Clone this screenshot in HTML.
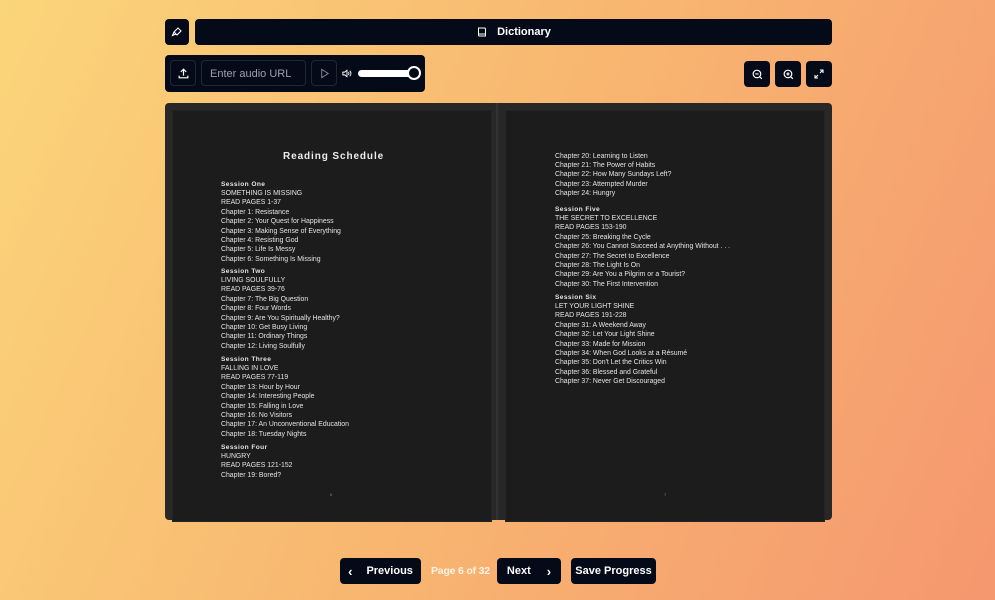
<!DOCTYPE html>
<html><head><meta charset="utf-8"><style>
*{box-sizing:border-box;margin:0;padding:0}
body{width:995px;height:600px;overflow:hidden;font-family:"Liberation Sans",sans-serif;background:linear-gradient(115deg,#fbd57a 0%,#f8b971 45%,#f5976f 100%);position:relative}
body:before{content:"";position:absolute;inset:0;background-image:radial-gradient(rgba(255,255,255,.25) 0.7px,transparent 0.8px);background-size:16px 16px}
.d{position:absolute;background:#050a18;border-radius:4px;color:#fff}
.btn{display:flex;align-items:center;justify-content:center;font-weight:bold;font-size:11px}
.in{position:absolute;border:1px solid #1f2737;border-radius:4px;background:#050a18}
.book{position:absolute;left:165px;top:103px;width:667px;height:417px;background:#282828;border-radius:4px}
.page{position:absolute;top:7px;height:412px;background:#1c1c1c;border:1px solid #242424}
.txt{position:absolute;color:#e4e4e4;font-size:6.9px;line-height:9.42px;white-space:nowrap}
.txt b{display:block;font-size:6.6px;letter-spacing:.4px}
h1{position:absolute;left:283px;top:151px;font-size:10px;color:#ededed;letter-spacing:.9px;font-weight:bold}
</style></head><body>
<div class="d btn" style="left:165px;top:19px;width:24px;height:26px">
<svg width="12" height="12" viewBox="0 0 24 24" fill="none" stroke="#fff" stroke-width="2.2"><path d="M14 4l6 6-8 8-6-6z M6 12l-3 7 7-3"/></svg></div>
<div class="d btn" style="left:195px;top:19px;width:637px;height:26px"><svg width="12" height="12" viewBox="0 0 24 24" fill="none" stroke="#fff" stroke-width="2"><path d="M5 4h12a2 2 0 0 1 2 2v14H7a2 2 0 0 1-2-2z M5 16h14"/></svg><span style="margin-left:9px">Dictionary</span></div>
<div class="d" style="left:165px;top:55px;width:260px;height:37px">
<div class="in" style="left:5px;top:5px;width:26px;height:26px"><svg style="position:absolute;left:6px;top:6px" width="13" height="13" viewBox="0 0 24 24" fill="none" stroke="#fff" stroke-width="2.2"><path d="M12 16V4M7 9l5-5 5 5M4 16v4h16v-4"/></svg></div>
<div class="in" style="left:36px;top:5px;width:105px;height:26px;color:#9aa0ab;font-size:11px;padding:7px 8px">Enter audio URL</div>
<div class="in" style="left:146px;top:5px;width:26px;height:26px"><svg style="position:absolute;left:7px;top:7px" width="11" height="11" viewBox="0 0 24 24" fill="none" stroke="#8a8f99" stroke-width="2"><path d="M6 3l14 9-14 9z"/></svg></div>
<svg style="position:absolute;left:176px;top:13px" width="11" height="11" viewBox="0 0 24 24" fill="none" stroke="#fff" stroke-width="2"><path d="M4 9h4l5-4v14l-5-4H4z M16 9a4 4 0 0 1 0 6 M19 6a8 8 0 0 1 0 12"/></svg>
<div style="position:absolute;left:193px;top:15px;width:60px;height:7px;background:#fff;border-radius:4px"></div>
<div style="position:absolute;left:242px;top:11px;width:14px;height:14px;background:#050a18;border:2px solid #fff;border-radius:50%"></div>
</div>
<div class="d btn" style="left:744px;top:61px;width:26px;height:26px"><svg width="13" height="13" viewBox="0 0 24 24" fill="none" stroke="#fff" stroke-width="2.2"><circle cx="11" cy="11" r="7"/><path d="M20 20l-4-4M8 11h6"/></svg></div>
<div class="d btn" style="left:775px;top:61px;width:26px;height:26px"><svg width="13" height="13" viewBox="0 0 24 24" fill="none" stroke="#fff" stroke-width="2.2"><circle cx="11" cy="11" r="7"/><path d="M20 20l-4-4M8 11h6M11 8v6"/></svg></div>
<div class="d btn" style="left:806px;top:61px;width:26px;height:26px"><svg width="12" height="12" viewBox="0 0 24 24" fill="none" stroke="#fff" stroke-width="2.2"><path d="M14 4h6v6M20 4l-6 6M10 20H4v-6M4 20l6-6"/></svg></div>
<div class="book">
<div class="page" style="left:7px;width:320px"></div>
<div style="position:absolute;left:331px;top:0;width:2px;height:417px;background:#333"></div>
<div class="page" style="left:340px;width:320px"></div>
</div>
<h1>Reading Schedule</h1>
<div class="txt" style="left:221px;top:179.5px"><b>Session One</b>SOMETHING IS MISSING<br>READ PAGES 1-37<br>Chapter 1: Resistance<br>Chapter 2: Your Quest for Happiness<br>Chapter 3: Making Sense of Everything<br>Chapter 4: Resisting God<br>Chapter 5: Life Is Messy<br>Chapter 6: Something Is Missing</div>
<div class="txt" style="left:221px;top:266.5px"><b>Session Two</b>LIVING SOULFULLY<br>READ PAGES 39-76<br>Chapter 7: The Big Question<br>Chapter 8: Four Words<br>Chapter 9: Are You Spiritually Healthy?<br>Chapter 10: Get Busy Living<br>Chapter 11: Ordinary Things<br>Chapter 12: Living Soulfully</div>
<div class="txt" style="left:221px;top:354.5px"><b>Session Three</b>FALLING IN LOVE<br>READ PAGES 77-119<br>Chapter 13: Hour by Hour<br>Chapter 14: Interesting People<br>Chapter 15: Falling in Love<br>Chapter 16: No Visitors<br>Chapter 17: An Unconventional Education<br>Chapter 18: Tuesday Nights</div>
<div class="txt" style="left:221px;top:442.5px"><b>Session Four</b>HUNGRY<br>READ PAGES 121-152<br>Chapter 19: Bored?</div>
<div class="txt" style="left:555px;top:151.5px">Chapter 20: Learning to Listen<br>Chapter 21: The Power of Habits<br>Chapter 22: How Many Sundays Left?<br>Chapter 23: Attempted Murder<br>Chapter 24: Hungry</div>
<div class="txt" style="left:555px;top:204.5px"><b>Session Five</b>THE SECRET TO EXCELLENCE<br>READ PAGES 153-190<br>Chapter 25: Breaking the Cycle<br>Chapter 26: You Cannot Succeed at Anything Without . . .<br>Chapter 27: The Secret to Excellence<br>Chapter 28: The Light Is On<br>Chapter 29: Are You a Pilgrim or a Tourist?<br>Chapter 30: The First Intervention</div>
<div class="txt" style="left:555px;top:292.5px"><b>Session Six</b>LET YOUR LIGHT SHINE<br>READ PAGES 191-228<br>Chapter 31: A Weekend Away<br>Chapter 32: Let Your Light Shine<br>Chapter 33: Made for Mission<br>Chapter 34: When God Looks at a Résumé<br>Chapter 35: Don't Let the Critics Win<br>Chapter 36: Blessed and Grateful<br>Chapter 37: Never Get Discouraged</div>
<div class="txt" style="left:330px;top:490px;font-size:4px;color:#888">6</div>
<div class="txt" style="left:664px;top:490px;font-size:4px;color:#888">7</div>
<div class="d btn" style="left:340px;top:558px;width:81px;height:26px"><span style="margin-right:14px;font-size:13px">&#8249;</span>Previous</div>
<div style="position:absolute;left:431px;top:565px;color:#fff4e6;font-size:10.5px;font-weight:bold;letter-spacing:-.2px">Page 6 of 32</div>
<div class="d btn" style="left:497px;top:558px;width:64px;height:26px">Next<span style="margin-left:16px;font-size:13px">&#8250;</span></div>
<div class="d btn" style="left:571px;top:558px;width:85px;height:26px">Save Progress</div>
</body></html>
